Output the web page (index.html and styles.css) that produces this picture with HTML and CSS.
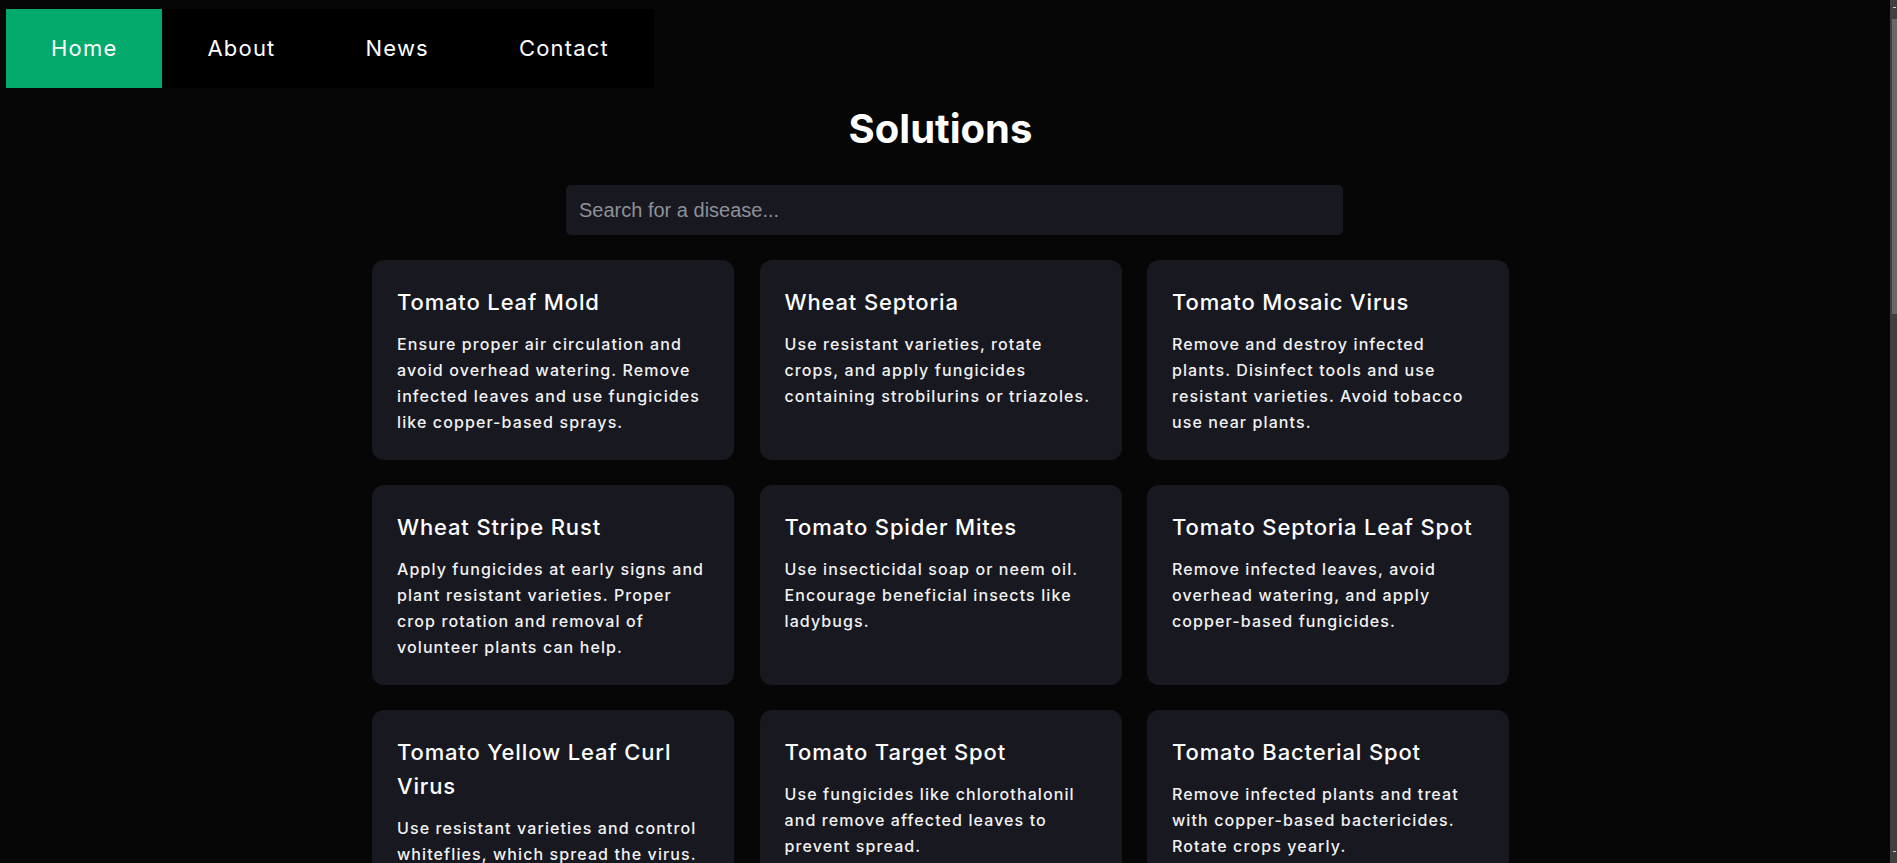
FILE: index.html
```html
<!DOCTYPE html>
<html lang="en">
<head>
<meta charset="utf-8">
<title>Solutions</title>
<link rel="stylesheet" href="styles.css">
</head>
<body>
<nav class="nav">
  <a class="nav-link active" href="#">Home</a>
  <a class="nav-link" href="#">About</a>
  <a class="nav-link" href="#">News</a>
  <a class="nav-link" href="#">Contact</a>
</nav>
<main class="page">
  <h1 class="title">Solutions</h1>
  <input class="search" type="text" placeholder="Search for a disease...">
  <section class="grid">
    <article class="card">
      <h3 class="card-title">Tomato Leaf Mold</h3>
      <p class="card-text">Ensure proper air circulation and avoid overhead watering. Remove infected leaves and use fungicides like copper-based sprays.</p>
    </article>
    <article class="card">
      <h3 class="card-title">Wheat Septoria</h3>
      <p class="card-text">Use resistant varieties, rotate crops, and apply fungicides containing strobilurins or triazoles.</p>
    </article>
    <article class="card">
      <h3 class="card-title">Tomato Mosaic Virus</h3>
      <p class="card-text">Remove and destroy infected plants. Disinfect tools and use resistant varieties. Avoid tobacco use near plants.</p>
    </article>
    <article class="card">
      <h3 class="card-title">Wheat Stripe Rust</h3>
      <p class="card-text">Apply fungicides at early signs and plant resistant varieties. Proper crop rotation and removal of volunteer plants can help.</p>
    </article>
    <article class="card">
      <h3 class="card-title">Tomato Spider Mites</h3>
      <p class="card-text">Use insecticidal soap or neem oil. Encourage beneficial insects like ladybugs.</p>
    </article>
    <article class="card">
      <h3 class="card-title">Tomato Septoria Leaf Spot</h3>
      <p class="card-text">Remove infected leaves, avoid overhead watering, and apply copper-based fungicides.</p>
    </article>
    <article class="card">
      <h3 class="card-title">Tomato Yellow Leaf Curl Virus</h3>
      <p class="card-text">Use resistant varieties and control whiteflies, which spread the virus.</p>
    </article>
    <article class="card">
      <h3 class="card-title">Tomato Target Spot</h3>
      <p class="card-text">Use fungicides like chlorothalonil and remove affected leaves to prevent spread.</p>
    </article>
    <article class="card">
      <h3 class="card-title">Tomato Bacterial Spot</h3>
      <p class="card-text">Remove infected plants and treat with copper-based bactericides. Rotate crops yearly.</p>
    </article>
  </section>
</main>
<div class="scrollbar" aria-hidden="true">
  <span class="scroll-arrow scroll-arrow-up"></span>
  <span class="scroll-thumb"></span>
  <span class="scroll-arrow scroll-arrow-down"></span>
</div>
</body>
</html>
```
FILE: styles.css
```css
html {
  background: #060606;
}
body {
  margin: 0;
  background: #060606;
  color: #ffffff;
  font-family: Inter, "Noto Sans", sans-serif;
}
.nav {
  display: inline-flex;
  margin: 9px 0 0 6px;
  background: #000000;
}
.nav-link {
  display: block;
  padding: 0 45px;
  height: 79px;
  line-height: 79px;
  font-size: 22px;
  font-weight: 400;
  letter-spacing: 1.2px;
  color: #ffffff;
  text-decoration: none;
}
.nav-link.active {
  background: #02aa6c;
}
.page {
  display: flex;
  flex-direction: column;
  align-items: center;
  padding: 0 16px 40px 0;
}
.title {
  margin: 17px 0 32px;
  font-size: 40px;
  line-height: 48px;
  font-weight: 700;
}
.search {
  box-sizing: border-box;
  width: 777px;
  height: 50px;
  margin: 0 0 25px 28px;
  padding: 0 13px;
  border: none;
  border-radius: 5px;
  background: #181920;
  color: #e0e0e0;
  font-family: "Liberation Sans", Arial, sans-serif;
  font-size: 20px;
  outline: none;
}
.search::placeholder {
  color: #8d9098;
}
.grid {
  display: grid;
  grid-template-columns: repeat(3, 362px);
  column-gap: 25.5px;
  row-gap: 25px;
}
.card {
  background: #181920;
  border-radius: 12px;
  padding: 25px;
}
.card-title {
  margin: 0 0 12px;
  font-size: 22px;
  line-height: 34px;
  font-weight: 500;
  letter-spacing: 0.85px;
}
.card-text {
  margin: 0;
  font-size: 16px;
  line-height: 26px;
  font-weight: 500;
  letter-spacing: 1.1px;
  color: #f2f2f2;
}
.scrollbar {
  position: fixed;
  top: 0;
  right: 0;
  bottom: 0;
  width: 7px;
  background: #3f3f3f;
}
.scroll-thumb {
  position: absolute;
  top: 19px;
  left: 2px;
  right: 0;
  height: 295px;
  background: #686868;
}
.scroll-arrow {
  position: absolute;
  left: 3px;
  width: 3px;
  height: 1px;
  background: #d0d0d0;
}
.scroll-arrow-up {
  top: 7px;
}
.scroll-arrow-down {
  bottom: 11px;
}
```
